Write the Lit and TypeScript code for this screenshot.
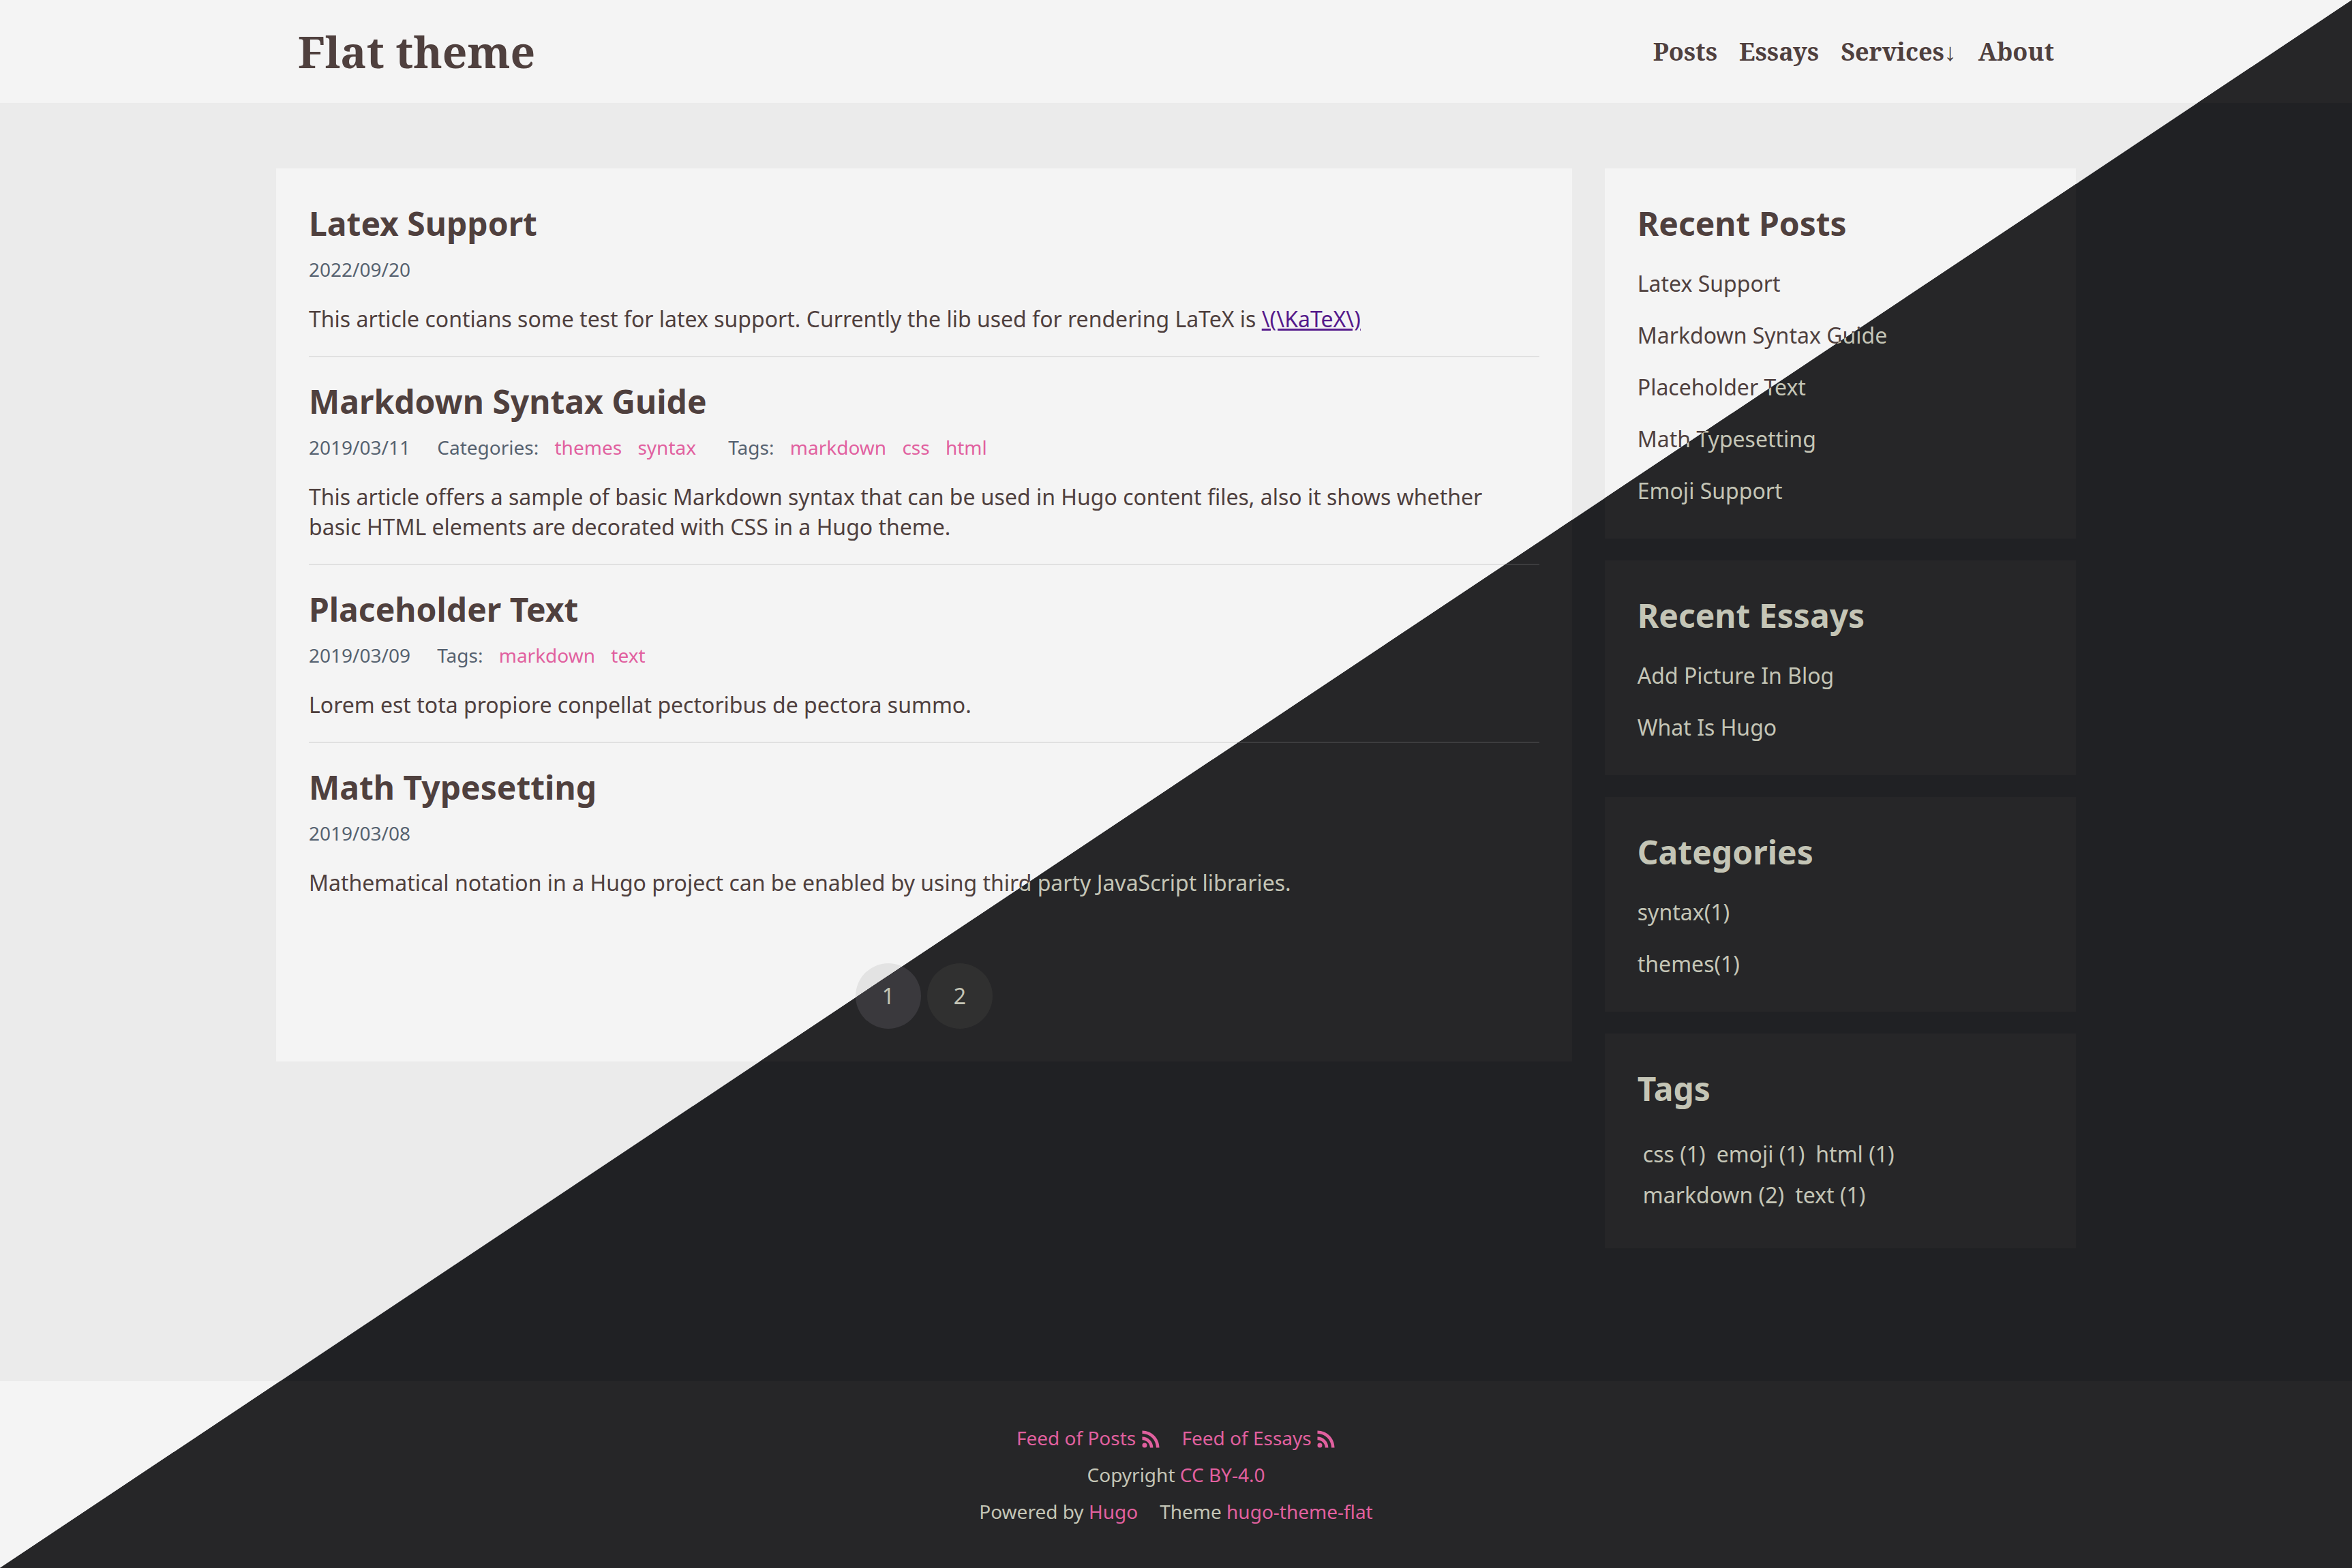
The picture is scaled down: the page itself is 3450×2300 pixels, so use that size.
import { LitElement, html, css, nothing } from "lit";
import { customElement } from "lit/decorators.js";

interface Post {
  title: string;
  date: string;
  categories?: string[];
  tags?: string[];
  summary: string;
  link?: string;
}

const posts: Post[] = [
  {
    title: "Latex Support",
    date: "2022/09/20",
    summary: "This article contians some test for latex support. Currently the lib used for rendering LaTeX is",
    link: "\\(\\KaTeX\\)",
  },
  {
    title: "Markdown Syntax Guide",
    date: "2019/03/11",
    categories: ["themes", "syntax"],
    tags: ["markdown", "css", "html"],
    summary:
      "This article offers a sample of basic Markdown syntax that can be used in Hugo content files, also it shows whether basic HTML elements are decorated with CSS in a Hugo theme.",
  },
  {
    title: "Placeholder Text",
    date: "2019/03/09",
    tags: ["markdown", "text"],
    summary: "Lorem est tota propiore conpellat pectoribus de pectora summo.",
  },
  {
    title: "Math Typesetting",
    date: "2019/03/08",
    summary: "Mathematical notation in a Hugo project can be enabled by using third party JavaScript libraries.",
  },
];

const widgets = [
  {
    title: "Recent Posts",
    items: ["Latex Support", "Markdown Syntax Guide", "Placeholder Text", "Math Typesetting", "Emoji Support"],
  },
  { title: "Recent Essays", items: ["Add Picture In Blog", "What Is Hugo"] },
  { title: "Categories", items: ["syntax(1)", "themes(1)"] },
];

const tagCloud = ["css (1)", "emoji (1)", "html (1)", "markdown (2)", "text (1)"];

const rssIcon = html`<svg class="rss" viewBox="3.08 3.52 17.4 17.4" aria-hidden="true">
  <circle cx="6.18" cy="17.82" r="2.18" />
  <path d="M4 4.44v2.83c7.03 0 12.73 5.7 12.73 12.73h2.83c0-8.59-6.97-15.56-15.56-15.56zm0 5.66v2.83c3.9 0 7.07 3.17 7.07 7.07h2.83c0-5.47-4.43-9.9-9.9-9.9z" />
</svg>`;

@customElement("blog-page")
export class BlogPage extends LitElement {
  static styles = css`
    :host {
      --bg: #ebebeb;
      --surface: #f4f4f4;
      --text: #4f403e;
      --muted: #566270;
      --line: #e0e0e0;
      --page: #ebebeb;
      --page-active: #e3e3e3;
      --accent: #e1609f;
      display: flex;
      flex-direction: column;
      min-height: 100vh;
      background: var(--bg);
      color: var(--text);
      font: 32px/44px "Noto Sans", sans-serif;
    }
    :host([theme="dark"]) {
      --bg: #202124;
      --surface: #262628;
      --text: #c4c5b6;
      --muted: #9aa0a6;
      --line: #3c3c3e;
      --page: #303030;
      --page-active: #3a393d;
    }
    h1, h2, p, ul {
      margin: 0;
      padding: 0;
    }
    ul {
      list-style: none;
    }
    a {
      color: inherit;
      text-decoration: none;
    }
    .header {
      background: var(--surface);
    }
    .bar {
      display: flex;
      align-items: center;
      justify-content: space-between;
      box-sizing: border-box;
      max-width: 2640px;
      margin: 0 auto;
      padding: 32px;
      font-family: "Noto Serif", "Noto Sans", serif;
      font-weight: 700;
    }
    .brand {
      font-size: 64px;
      line-height: 87px;
    }
    .nav {
      display: flex;
      gap: 32px;
      font-size: 36px;
      line-height: 49px;
    }
    .body {
      flex: 1;
      display: grid;
      grid-template-columns: 11fr 4fr;
      gap: 48px;
      align-items: start;
      box-sizing: border-box;
      width: 100%;
      max-width: 2640px;
      margin: 0 auto;
      padding: 96px 0;
    }
    .card {
      background: var(--surface);
      padding: 48px;
    }
    .title {
      font-size: 48px;
      line-height: 65px;
      font-weight: 700;
    }
    .post + .post {
      margin-top: 32px;
      border-top: 2px solid var(--line);
      padding-top: 32px;
    }
    .meta {
      margin: 16px 0 32px;
      font-size: 28px;
      line-height: 38px;
      color: var(--muted);
    }
    .group {
      margin-left: 32px;
    }
    .label {
      margin-right: 8px;
    }
    .term {
      margin: 0 8px;
      color: var(--accent);
    }
    .visited {
      color: #551a8b;
      text-decoration: underline;
    }
    .pages {
      display: flex;
      justify-content: center;
      gap: 9px;
      margin-top: 96px;
    }
    .page {
      width: 96px;
      border-radius: 50%;
      background: var(--page);
      line-height: 96px;
      text-align: center;
    }
    .page.active {
      background: var(--page-active);
    }
    .side {
      display: grid;
      gap: 32px;
    }
    .list {
      display: grid;
      gap: 32px;
      margin-top: 34px;
    }
    .cloud {
      display: flex;
      flex-wrap: wrap;
      gap: 16px;
      margin-top: 34px;
      padding: 8px;
    }
    .footer {
      display: grid;
      gap: 16px;
      padding: 64px 32px;
      background: var(--surface);
      font-size: 28px;
      line-height: 38px;
    }
    .row {
      display: flex;
      justify-content: center;
      gap: 32px;
    }
    .accent {
      color: var(--accent);
    }
    .rss {
      width: 28px;
      height: 28px;
      vertical-align: -5px;
      fill: currentColor;
    }
  `;

  private terms(label: string, items?: string[]) {
    return items
      ? html` <span class="group"
          ><span class="label">${label}:</span>${items.map((t) => html` <a class="term" href="#">${t}</a>`)}</span
        >`
      : nothing;
  }

  private post(p: Post) {
    return html`<article class="post">
      <h2 class="title"><a href="#">${p.title}</a></h2>
      <div class="meta"><time>${p.date}</time>${this.terms("Categories", p.categories)}${this.terms("Tags", p.tags)}</div>
      <p>${p.summary}${p.link ? html` <a class="visited" href="#">${p.link}</a>` : nothing}</p>
    </article>`;
  }

  render() {
    return html`
      <header class="header">
        <div class="bar">
          <h1 class="brand"><a href="#">Flat theme</a></h1>
          <nav class="nav">
            ${["Posts", "Essays", "Services↓", "About"].map((n) => html`<a href="#">${n}</a>`)}
          </nav>
        </div>
      </header>
      <div class="body">
        <main class="card">
          ${posts.map((p) => this.post(p))}
          <nav class="pages">
            <a class="page active" href="#">1</a>
            <a class="page" href="#">2</a>
          </nav>
        </main>
        <aside class="side">
          ${widgets.map(
            (w) => html`<section class="card">
              <h2 class="title">${w.title}</h2>
              <ul class="list">
                ${w.items.map((i) => html`<li><a href="#">${i}</a></li>`)}
              </ul>
            </section>`
          )}
          <section class="card">
            <h2 class="title">Tags</h2>
            <div class="cloud">${tagCloud.map((t) => html`<a href="#">${t}</a>`)}</div>
          </section>
        </aside>
      </div>
      <footer class="footer">
        <div class="row accent">
          <a href="#">Feed of Posts ${rssIcon}</a>
          <a href="#">Feed of Essays ${rssIcon}</a>
        </div>
        <div class="row"><span>Copyright <a class="accent" href="#">CC BY-4.0</a></span></div>
        <div class="row">
          <span>Powered by <a class="accent" href="#">Hugo</a></span>
          <span>Theme <a class="accent" href="#">hugo-theme-flat</a></span>
        </div>
      </footer>
    `;
  }
}

@customElement("app-root")
export class AppRoot extends LitElement {
  static styles = css`
    :host {
      display: grid;
    }
    .layer {
      grid-area: 1 / 1;
    }
    .dark {
      clip-path: polygon(100% 0, 100% 100%, 0 100%);
    }
  `;

  render() {
    return html`
      <blog-page class="layer" theme="light"></blog-page>
      <blog-page class="layer dark" theme="dark"></blog-page>
    `;
  }
}
